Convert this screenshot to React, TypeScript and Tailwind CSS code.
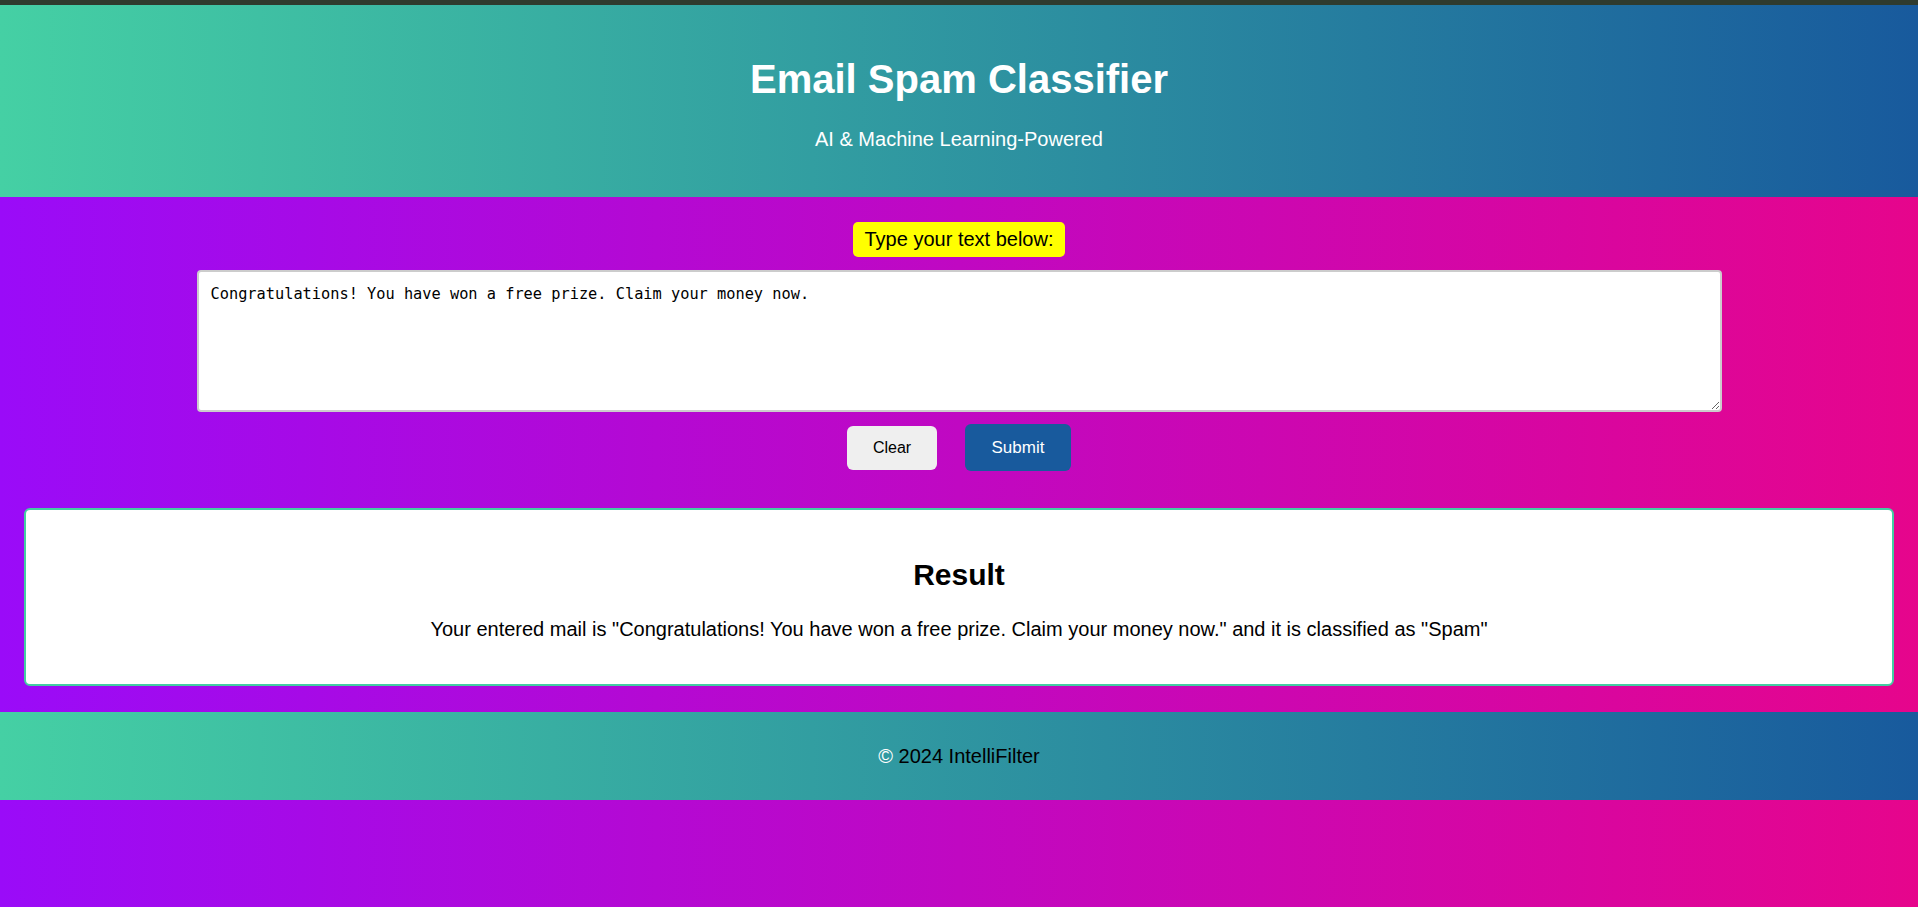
export default function App() {
    const mail = "Congratulations! You have won a free prize. Claim your money now.";

    return (
        <div
            className="min-h-screen bg-[linear-gradient(to_right,#9a0bf8,#e6058c)] text-black"
            style={{ fontFamily: '"Liberation Sans", Arial, sans-serif' }}
        >
            {/* top strip */}
            <div className="h-[5px] bg-[#2f3b2e]" />

            {/* Header */}
            <header className="h-[192px] bg-[linear-gradient(to_right,#45d0a4,#185a9d)] flex flex-col items-center text-white">
                <h1 className="pt-[52px] text-[40px] leading-[45px] font-bold">Email Spam Classifier</h1>
                <p className="mt-[26px] text-[20px] leading-[23px]">AI &amp; Machine Learning-Powered</p>
            </header>

            {/* Input */}
            <section className="pt-[25px] flex flex-col items-center">
                <label
                    htmlFor="mail"
                    className="bg-[#ffff00] rounded-[5px] px-3 py-[6px] text-[20px] leading-[23px]"
                >
                    Type your text below:
                </label>

                <textarea
                    id="mail"
                    defaultValue={mail}
                    className="mt-[13px] w-[1525px] h-[142px] bg-white border-2 border-[#cccccc] rounded-[4px] pl-[12px] pr-3 pt-[13px] text-[15.3px] leading-[18px] text-black outline-none"
                    style={{ fontFamily: '"DejaVu Sans Mono", "Liberation Mono", monospace' }}
                />

                <div className="mt-[12px] flex items-center gap-[28px]">
                    <button className="w-[90px] h-[44px] rounded-[6px] bg-[#efefef] text-[16px] text-black">
                        Clear
                    </button>
                    <button className="w-[106px] h-[47px] rounded-[6px] bg-[#185a9d] text-[17px] text-white">
                        Submit
                    </button>
                </div>
            </section>

            {/* Result */}
            <div className="mt-[37px] mx-[24px] bg-white border-2 border-[#43cea2] rounded-[6px] text-center pt-[48px] pb-[43px]">
                <h2 className="text-[30px] leading-[34px] font-bold">Result</h2>
                <p className="mt-[26px] text-[20px] leading-[23px]">
                    Your entered mail is "{mail}" and it is classified as "Spam"
                </p>
            </div>

            {/* Footer */}
            <footer className="mt-[26px] h-[88px] bg-[linear-gradient(to_right,#45d0a4,#185a9d)] flex items-center justify-center text-[20px]">
                <span className="text-white">©</span>
                <span>&nbsp;2024 IntelliFilter</span>
            </footer>
        </div>
    );
}
